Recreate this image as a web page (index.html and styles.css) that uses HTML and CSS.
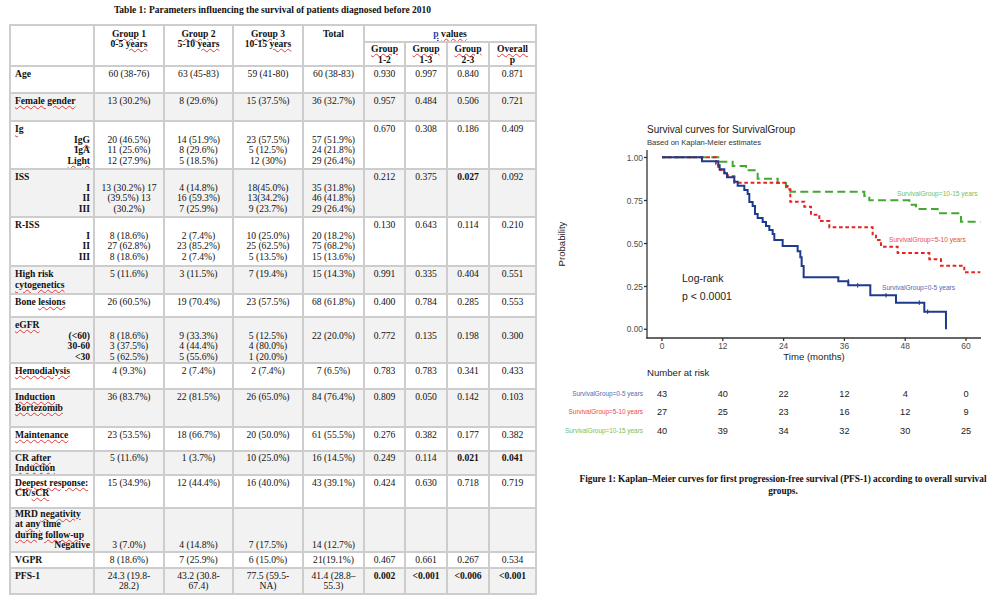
FILE: index.html
```html
<!DOCTYPE html>
<html lang="en">
<head>
<meta charset="utf-8">
<title>Survival table and Kaplan-Meier curves</title>
<link rel="stylesheet" href="styles.css">
</head>
<body>
<div class="page">
  <section class="left">
    <h1 class="ttl">Table 1: Parameters influencing the survival of patients diagnosed before 2010</h1>
    <table class="tbl">
      <colgroup>
        <col class="c-lab"><col class="c-g1"><col class="c-g2"><col class="c-g3"><col class="c-tot">
        <col class="c-p1"><col class="c-p2"><col class="c-p3"><col class="c-po">
      </colgroup>
      <thead>
        <tr class="r-h1">
          <th rowspan="2"></th>
          <th rowspan="2"><span class="sp">Group</span> 1<br>0-5 <span class="sp">years</span></th>
          <th rowspan="2"><span class="sp">Group</span> 2<br>5-10 <span class="sp">years</span></th>
          <th rowspan="2"><span class="sp">Group</span> 3<br>10-15 <span class="sp">years</span></th>
          <th rowspan="2">Total</th>
          <th colspan="4"><span class="gr">p</span> <span class="sp">values</span></th>
        </tr>
        <tr class="r-h2">
          <th><span class="sp">Group</span><br>1-2</th>
          <th><span class="sp">Group</span><br>1-3</th>
          <th><span class="sp">Group</span><br>2-3</th>
          <th><span class="sp">Overall</span><br>p</th>
        </tr>
      </thead>
      <tbody>
        <tr class="r-age">
          <td class="lab">Age</td>
          <td>60 (38-76)</td><td>63 (45-83)</td><td>59 (41-80)</td><td>60 (38-83)</td>
          <td>0.930</td><td>0.997</td><td>0.840</td><td>0.871</td>
        </tr>
        <tr class="r-fem">
          <td class="lab"><span class="sp">Female gender</span></td>
          <td>13 (30.2%)</td><td>8 (29.6%)</td><td>15 (37.5%)</td><td>36 (32.7%)</td>
          <td>0.957</td><td>0.484</td><td>0.506</td><td>0.721</td>
        </tr>
        <tr class="r-ig">
          <td class="lab"><span class="sp">Ig</span><span class="sl"><span class="sp">IgG</span></span><span class="sl">IgA</span><span class="sl"><span class="sp">Light</span></span></td>
          <td class="l2">20 (46.5%)<br>11 (25.6%)<br>12 (27.9%)</td>
          <td class="l2">14 (51.9%)<br>8 (29.6%)<br>5 (18.5%)</td>
          <td class="l2">23 (57.5%)<br>5 (12.5%)<br>12 (30%)</td>
          <td class="l2">57 (51.9%)<br>24 (21.8%)<br>29 (26.4%)</td>
          <td>0.670</td><td>0.308</td><td>0.186</td><td>0.409</td>
        </tr>
        <tr class="r-iss">
          <td class="lab">ISS<span class="sl">I</span><span class="sl">II</span><span class="sl">III</span></td>
          <td class="l2">13 (30.2%) 17<br>(39.5%) 13<br>(30.2%)</td>
          <td class="l2">4 (14.8%)<br>16 (59.3%)<br>7 (25.9%)</td>
          <td class="l2">18(45.0%)<br>13(34.2%)<br>9 (23.7%)</td>
          <td class="l2">35 (31.8%)<br>46 (41.8%)<br>29 (26.4%)</td>
          <td>0.212</td><td>0.375</td><td><b>0.027</b></td><td>0.092</td>
        </tr>
        <tr class="r-riss">
          <td class="lab">R-ISS<span class="sl">I</span><span class="sl">II</span><span class="sl">III</span></td>
          <td class="l2">8 (18.6%)<br>27 (62.8%)<br>8 (18.6%)</td>
          <td class="l2">2 (7.4%)<br>23 (85.2%)<br>2 (7.4%)</td>
          <td class="l2">10 (25.0%)<br>25 (62.5%)<br>5 (13.5%)</td>
          <td class="l2">20 (18.2%)<br>75 (68.2%)<br>15 (13.6%)</td>
          <td>0.130</td><td>0.643</td><td>0.114</td><td>0.210</td>
        </tr>
        <tr class="r-hrc">
          <td class="lab">High risk<br><span class="sp">cytogenetics</span></td>
          <td>5 (11.6%)</td><td>3 (11.5%)</td><td>7 (19.4%)</td><td>15 (14.3%)</td>
          <td>0.991</td><td>0.335</td><td>0.404</td><td>0.551</td>
        </tr>
        <tr class="r-bone">
          <td class="lab">Bone <span class="sp">lesions</span></td>
          <td>26 (60.5%)</td><td>19 (70.4%)</td><td>23 (57.5%)</td><td>68 (61.8%)</td>
          <td>0.400</td><td>0.784</td><td>0.285</td><td>0.553</td>
        </tr>
        <tr class="r-egfr">
          <td class="lab"><span class="sp">eGFR</span><span class="sl">(&lt;60)</span><span class="sl">30-60</span><span class="sl">&lt;30</span></td>
          <td class="l2">8 (18.6%)<br>3 (37.5%)<br>5 (62.5%)</td>
          <td class="l2">9 (33.3%)<br>4 (44.4%)<br>5 (55.6%)</td>
          <td class="l2">5 (12.5%)<br>4 (80.0%)<br>1 (20.0%)</td>
          <td class="l2">22 (20.0%)</td>
          <td class="l2">0.772</td><td class="l2">0.135</td><td class="l2">0.198</td><td class="l2">0.300</td>
        </tr>
        <tr class="r-hemo">
          <td class="lab"><span class="sp">Hemodialysis</span></td>
          <td>4 (9.3%)</td><td>2 (7.4%)</td><td>2 (7.4%)</td><td>7 (6.5%)</td>
          <td>0.783</td><td>0.783</td><td>0.341</td><td>0.433</td>
        </tr>
        <tr class="r-ind">
          <td class="lab"><span class="sp">Induction</span><br><span class="sp">Bortezomib</span></td>
          <td>36 (83.7%)</td><td>22 (81.5%)</td><td>26 (65.0%)</td><td>84 (76.4%)</td>
          <td>0.809</td><td>0.050</td><td>0.142</td><td>0.103</td>
        </tr>
        <tr class="r-main">
          <td class="lab"><span class="sp">Maintenance</span></td>
          <td>23 (53.5%)</td><td>18 (66.7%)</td><td>20 (50.0%)</td><td>61 (55.5%)</td>
          <td>0.276</td><td>0.382</td><td>0.177</td><td>0.382</td>
        </tr>
        <tr class="r-cr">
          <td class="lab">CR <span class="sp">after</span><br><span class="sp">Induction</span></td>
          <td>5 (11.6%)</td><td>1 (3.7%)</td><td>10 (25.0%)</td><td>16 (14.5%)</td>
          <td>0.249</td><td>0.114</td><td><b>0.021</b></td><td><b>0.041</b></td>
        </tr>
        <tr class="r-deep">
          <td class="lab"><span class="sp">Deepest response:</span><br>CR/<span class="sp">sCR</span></td>
          <td>15 (34.9%)</td><td>12 (44.4%)</td><td>16 (40.0%)</td><td>43 (39.1%)</td>
          <td>0.424</td><td>0.630</td><td>0.718</td><td>0.719</td>
        </tr>
        <tr class="r-mrd">
          <td class="lab">MRD <span class="sp">negativity</span><br>at <span class="sp">any</span> time<br><span class="sp">during follow-up</span><span class="sl">Negative</span></td>
          <td class="l4">3 (7.0%)</td><td class="l4">4 (14.8%)</td><td class="l4">7 (17.5%)</td><td class="l4">14 (12.7%)</td>
          <td></td><td></td><td></td><td></td>
        </tr>
        <tr class="r-vgpr">
          <td class="lab">VGPR</td>
          <td>8 (18.6%)</td><td>7 (25.9%)</td><td>6 (15.0%)</td><td>21(19.1%)</td>
          <td>0.467</td><td>0.661</td><td>0.267</td><td>0.534</td>
        </tr>
        <tr class="r-pfs">
          <td class="lab">PFS-1</td>
          <td>24.3 (19.8-<br>28.2)</td><td>43.2 (30.8-<br>67.4)</td><td>77.5 (59.5-<br>NA)</td><td>41.4 (28.8–<br>55.3)</td>
          <td><b>0.002</b></td><td><b>&lt;0.001</b></td><td><b>&lt;0.006</b></td><td><b>&lt;0.001</b></td>
        </tr>
      </tbody>
    </table>
    <div class="pg-edge"></div>
  </section>

  <section class="right">
    <svg class="km" viewBox="545 110 455 340" width="455" height="340" role="img" aria-label="Kaplan-Meier survival curves">
      <text class="t-title" x="656" y="132.5">Survival curves for SurvivalGroup</text>
      <text class="t-sub" x="656" y="144.5">Based on Kaplan-Meier estimates</text>

      <g class="axis">
        <line x1="656" y1="150" x2="656" y2="338.5"/>
        <line x1="655.3" y1="338" x2="990" y2="338"/>
        <line x1="653" y1="157.5" x2="656" y2="157.5"/>
        <line x1="653" y1="200.5" x2="656" y2="200.5"/>
        <line x1="653" y1="243.5" x2="656" y2="243.5"/>
        <line x1="653" y1="286.5" x2="656" y2="286.5"/>
        <line x1="653" y1="329.3" x2="656" y2="329.3"/>
        <line x1="671" y1="338" x2="671" y2="341"/>
        <line x1="731.8" y1="338" x2="731.8" y2="341"/>
        <line x1="792.6" y1="338" x2="792.6" y2="341"/>
        <line x1="853.4" y1="338" x2="853.4" y2="341"/>
        <line x1="914.2" y1="338" x2="914.2" y2="341"/>
        <line x1="975" y1="338" x2="975" y2="341"/>
      </g>
      <g class="ytick">
        <text x="652" y="160.5">1.00</text>
        <text x="652" y="203.5">0.75</text>
        <text x="652" y="246.5">0.50</text>
        <text x="652" y="289.5">0.25</text>
        <text x="652" y="332.3">0.00</text>
      </g>
      <g class="xtick">
        <text x="671" y="349">0</text>
        <text x="731.8" y="349">12</text>
        <text x="792.6" y="349">24</text>
        <text x="853.4" y="349">36</text>
        <text x="914.2" y="349">48</text>
        <text x="975" y="349">60</text>
      </g>
      <text class="t-axis" x="823" y="359.5" text-anchor="middle">Time (months)</text>
      <text class="t-axis" transform="translate(573.5 244) rotate(-90)" text-anchor="middle">Probability</text>

      <g transform="translate(640 140) scale(0.3333)" fill="none">
        <path class="c-green" d="M93,52 H262 V65 H305 V78 H345 V91 H380 V116 H440 V129 H465 V142 H478 V155 H700 V168 H715 V181 H835 V194 H855 V207 H920 V220 H990 V245 H1048"/>
        <path class="c-red" d="M93,52 H255 V71 H262 V90 H280 V100 H290 V109 H310 V128 H465 V138 H470 V148 H478 V185 H520 V200 H540 V224 H565 V243 H595 V262 H725 V283 H735 V300 H750 V320 H800 V339 H895 V358 H930 V377 H1000 V397 H1048"/>
        <path class="c-blue" d="M93,52 H213 V64 H262 V76 H266 V88 H280 V100 H288 V112 H310 V125 H320 V137 H340 V150 H350 V162 H355 V186 H365 V198 H372 V222 H380 V234 H395 V246 H405 V258 H415 V270 H425 V282 H430 V300 H455 V318 H500 V334 H508 V352 H512 V378 H518 V412 H622 V424 H652 V436 H718 V466 H795 V488 H880 V515 H945 V568"/>
        <g class="cens">
          <path d="M652,417 V431 M680,429 V443 M765,459 V473 M865,481 V495 M890,508 V522"/>
        </g>
      </g>

      <text class="lbl lbl-g" x="906" y="195.5">SurvivalGroup=10-15 years</text>
      <text class="lbl lbl-r" x="898" y="241.5">SurvivalGroup=5-10 years</text>
      <text class="lbl lbl-b" x="891" y="289.5">SurvivalGroup=0-5 years</text>

      <text class="t-logrank" x="691" y="281.5">Log-rank</text>
      <text class="t-logrank" x="691" y="299.5">p &lt; 0.0001</text>

      <text class="t-risk" x="656" y="376">Number at risk</text>
      <g class="risk-lbl">
        <text class="lbl-b" x="652" y="395.5">SurvivalGroup=0-5 years</text>
        <text class="lbl-r" x="652" y="414">SurvivalGroup=5-10 years</text>
        <text class="lbl-g" x="652" y="432.5">SurvivalGroup=10-15 years</text>
      </g>
      <g class="risk-num">
        <text x="671" y="396.5">43</text><text x="731.8" y="396.5">40</text><text x="792.6" y="396.5">22</text><text x="853.4" y="396.5">12</text><text x="914.2" y="396.5">4</text><text x="975" y="396.5">0</text>
        <text x="671" y="415">27</text><text x="731.8" y="415">25</text><text x="792.6" y="415">23</text><text x="853.4" y="415">16</text><text x="914.2" y="415">12</text><text x="975" y="415">9</text>
        <text x="671" y="433.5">40</text><text x="731.8" y="433.5">39</text><text x="792.6" y="433.5">34</text><text x="853.4" y="433.5">32</text><text x="914.2" y="433.5">30</text><text x="975" y="433.5">25</text>
      </g>
    </svg>
    <p class="cap">Figure 1: Kaplan–Meier curves for first progression-free survival (PFS-1) according to overall survival groups.</p>
  </section>
</div>
</body>
</html>
```

FILE: styles.css
```css
* { box-sizing: border-box; }
html, body { margin: 0; padding: 0; background: #ffffff; }
body { width: 1000px; height: 597px; overflow: hidden; }

.page { display: flex; align-items: flex-start; }

/* ---------- left: table ---------- */
.left { flex: none; width: 536px; padding-left: 9px; }
.ttl {
  margin: 0; height: 24px; padding-top: 4px;
  font: bold 9.5px/12px "Liberation Serif", "Times New Roman", serif;
  text-align: center; color: #111;
}
.tbl {
  width: 526px; table-layout: fixed; border-collapse: collapse;
  font: 9.6px/10.5px "Liberation Serif", "Times New Roman", serif;
  color: #111;
}
.c-lab { width: 84px; }
.c-g1 { width: 70px; }
.c-g2 { width: 69px; }
.c-g3 { width: 70px; }
.c-tot { width: 61px; }
.c-p1 { width: 41px; }
.c-p2 { width: 42px; }
.c-p3 { width: 42px; }
.c-po { width: 47px; }

.tbl th, .tbl td {
  border: 2px solid #cdcdcd;
  vertical-align: top;
  text-align: center;
  padding: 2px 1px 0 1px;
  white-space: nowrap;
  overflow: hidden;
}
.tbl th { font-weight: bold; padding-top: 2.5px; }
.tbl .r-h2 th { padding-top: 1px; }
.tbl td.lab { text-align: left; font-weight: bold; padding-left: 4px; padding-right: 3px; }
.tbl td.l2 { padding-top: 12.5px; }
.tbl .r-cr td { padding-top: 0.5px; }
.tbl .r-mrd td { padding-top: 0; }
.tbl .r-mrd td.l4 { padding-top: 31.5px; }
.sl { display: block; text-align: right; }
.tbl tbody tr:nth-child(even) { background: #f2f2f2; }

.sp { text-decoration: underline wavy #e23a3a; text-decoration-thickness: 1px; text-underline-offset: 1px; }
.gr { text-decoration: underline double #2b4fd0; text-decoration-thickness: 1px; text-underline-offset: 1px; color: #2b3fa8; }

.r-h1 { height: 17px; }
.r-h2 { height: 24px; }
.r-age { height: 27px; }
.r-fem { height: 28px; }
.r-ig { height: 48px; }
.r-iss { height: 48px; }
.r-riss { height: 49px; }
.r-hrc { height: 28px; }
.r-bone { height: 23px; }
.r-egfr { height: 45px; }
.r-hemo { height: 26px; }
.r-ind { height: 38px; }
.r-main { height: 24px; }
.r-cr { height: 23px; }
.r-deep { height: 33px; }
.r-mrd { height: 43px; }
.r-vgpr { height: 16px; }
.r-pfs { height: 26px; }

.pg-edge { height: 6px; margin: 2px 0 0 -2px; background: #f2f2f2; }

/* ---------- right: figure ---------- */
.right { flex: none; width: 455px; padding-top: 110px; }
.km { display: block; font-family: "Liberation Sans", Arial, sans-serif; }
.t-title { font-size: 10px; fill: #222; }
.t-sub { font-size: 7.6px; fill: #333; }
.axis line { stroke: #333; stroke-width: 1.3; }
.ytick text { font-size: 8.4px; fill: #4d4d4d; text-anchor: end; }
.xtick text { font-size: 8.4px; fill: #4d4d4d; text-anchor: middle; }
.t-axis { font-size: 9.6px; fill: #222; }
.c-blue { stroke: #1c3b8e; stroke-width: 6; }
.c-red { stroke: #e8231f; stroke-width: 6; stroke-dasharray: 11 8; }
.c-green { stroke: #43a832; stroke-width: 6; stroke-dasharray: 24 13; }
.cens path { stroke: #1c3b8e; stroke-width: 3; }
.lbl { font-size: 6.6px; }
.lbl-g { fill: #72c05f; }
.lbl-r { fill: #ec4a46; }
.lbl-b { fill: #4d6db3; }
.t-logrank { font-size: 10.5px; fill: #222; }
.t-risk { font-size: 9.6px; fill: #222; }
.risk-lbl text { font-size: 6.4px; text-anchor: end; }
.risk-num text { font-size: 9.2px; fill: #222; text-anchor: middle; }

.cap {
  margin: 23px 0 0 0; padding: 0 1px 0 40px;
  font: bold 9.3px/12px "Liberation Serif", "Times New Roman", serif;
  text-align: center; color: #111;
}
```
